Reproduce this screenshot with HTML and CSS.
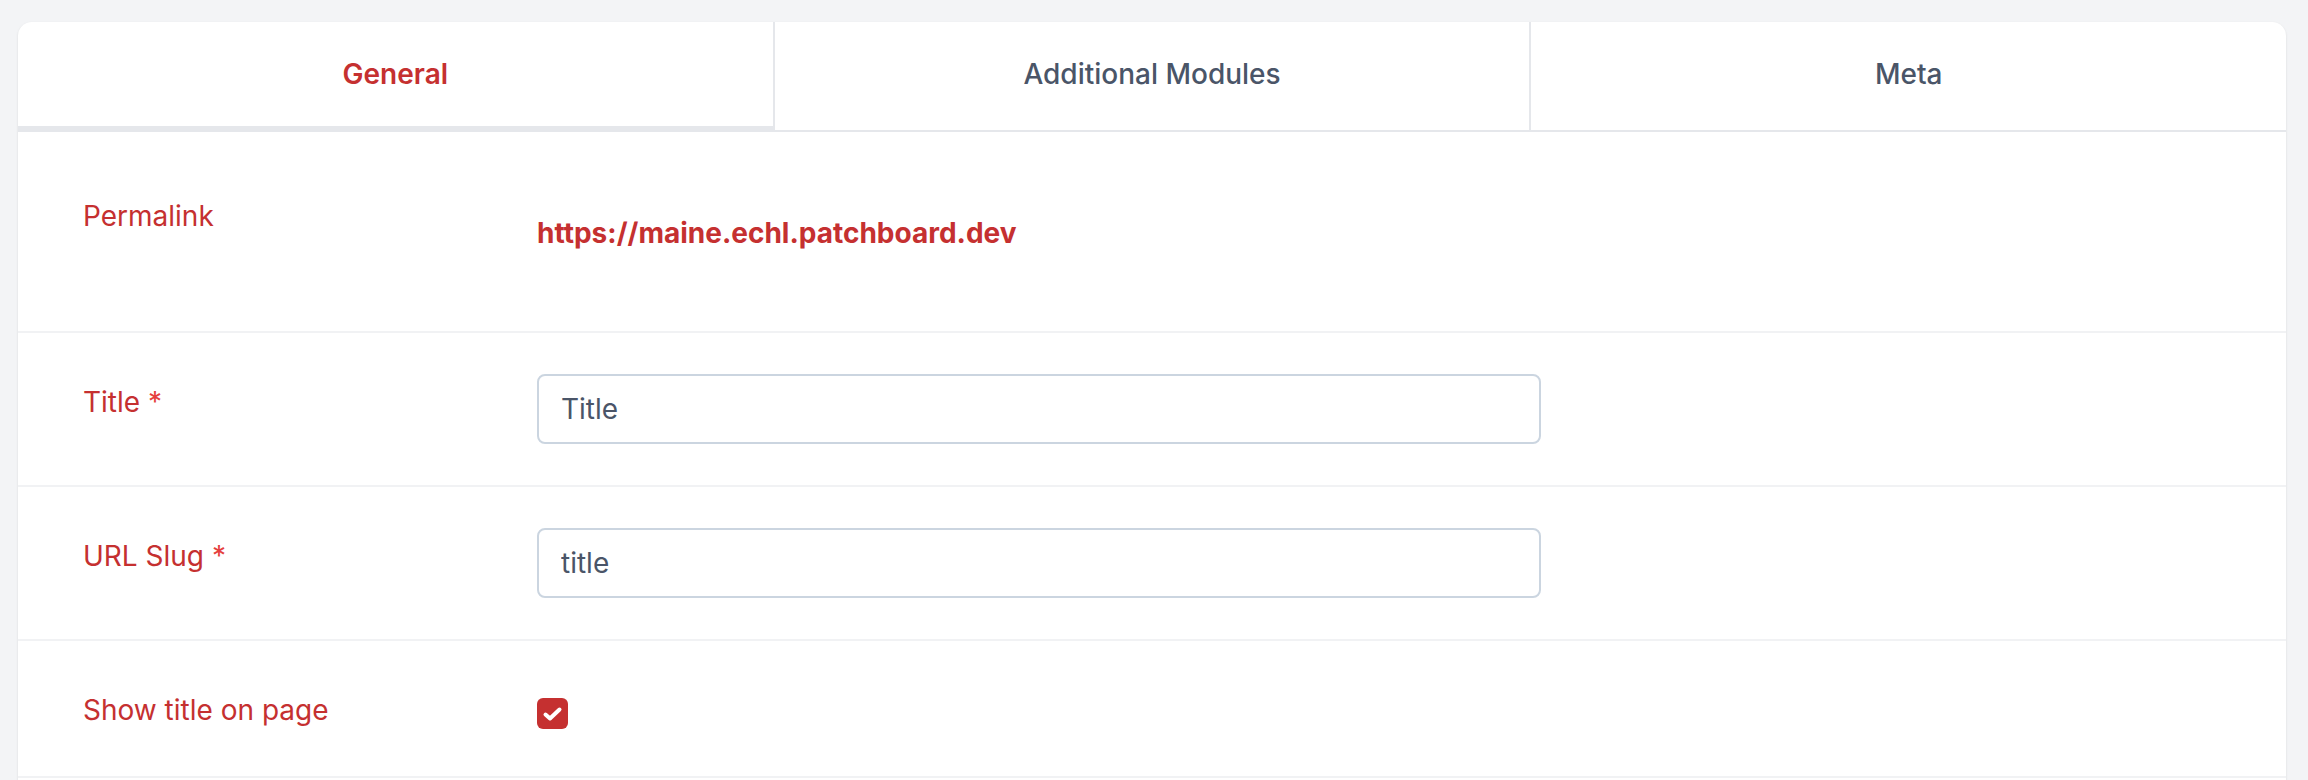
FILE: index.html
```html
<!DOCTYPE html>
<html lang="en">
<head>
<meta charset="utf-8">
<title>Page editor</title>
<link rel="stylesheet" href="styles.css">
</head>
<body>
<div class="card">
  <div class="tabs">
    <div class="tab tab-active">General</div>
    <div class="tab">Additional Modules</div>
    <div class="tab">Meta</div>
  </div>
  <div class="row row-permalink">
    <div class="label label-permalink">Permalink</div>
    <div class="field"><a class="permalink">https://maine.echl.patchboard.dev</a></div>
  </div>
  <div class="row">
    <div class="label">Title <span class="req">*</span></div>
    <div class="field"><input class="text-input" type="text" value="Title"></div>
  </div>
  <div class="row">
    <div class="label">URL Slug <span class="req">*</span></div>
    <div class="field"><input class="text-input" type="text" value="title"></div>
  </div>
  <div class="row row-check">
    <div class="label">Show title on page</div>
    <div class="field">
      <span class="checkbox">
        <svg viewBox="0 0 31 31" width="31" height="31"><polyline points="8.5,16.5 13,20.5 22.5,11.5" fill="none" stroke="#fff" stroke-width="4" stroke-linecap="round" stroke-linejoin="round"/></svg>
      </span>
    </div>
  </div>
  <div class="row row-more"></div>
</div>
</body>
</html>
```
FILE: styles.css
```css
* { box-sizing: border-box; }
html, body { margin: 0; height: 100%; }
body {
  background: #f3f4f6;
  font-family: Inter, "Noto Sans", sans-serif;
  padding: 22px 22px 0 18px;
  overflow: hidden;
}
.card {
  background: #fff;
  border-radius: 14px 14px 0 0;
  box-shadow: 0 1px 3px rgba(0,0,0,0.08), 0 1px 2px rgba(0,0,0,0.04);
  overflow: hidden;
}
.tabs {
  display: flex;
  height: 110px;
}
.tab {
  flex: 1;
  display: flex;
  align-items: center;
  justify-content: center;
  font-size: 28px;
  font-weight: 500;
  color: #4a5568;
  border-bottom: 2px solid #e5e7eb;
  padding-bottom: 4px;
}
.tab + .tab { border-left: 2px solid #e5e7eb; }
.tab-active {
  color: #c53030;
  font-weight: 600;
  border-bottom: 6px solid #e5e7eb;
  padding-bottom: 0;
}
.row {
  display: grid;
  grid-template-columns: 519px 1fr;
  align-items: start;
  height: 154px;
  border-bottom: 2px solid #f1f2f4;
}
.row-permalink { height: 201px; }
.row-check { height: 137px; }
.row-more { height: 160px; border-bottom: none; }
.label {
  padding-left: 65px;
  margin-top: 48px;
  font-size: 28px;
  line-height: 42px;
  color: #c53030;
}
.label-permalink { margin-top: 63px; }
.req { color: #e53e3e; }
.field { padding-right: 745px; }
.row .field { margin-top: 41px; }
.row-permalink .field { margin-top: 80px; }
.row-check .field { margin-top: 57px; }
.permalink {
  display: block;
  font-size: 28px;
  line-height: 42px;
  font-weight: 700;
  color: #c53030;
  text-decoration: none;
}
.text-input {
  display: block;
  width: 100%;
  height: 70px;
  border: 2px solid #cbd5e0;
  border-radius: 8px;
  padding: 0 22px;
  font-family: Inter, "Noto Sans", sans-serif;
  font-size: 28px;
  color: #4a5568;
  background: #fff;
  outline: none;
}
.checkbox {
  display: block;
  width: 31px;
  height: 31px;
  border-radius: 6px;
  background: #c53030;
}
.checkbox svg { display: block; }
```
